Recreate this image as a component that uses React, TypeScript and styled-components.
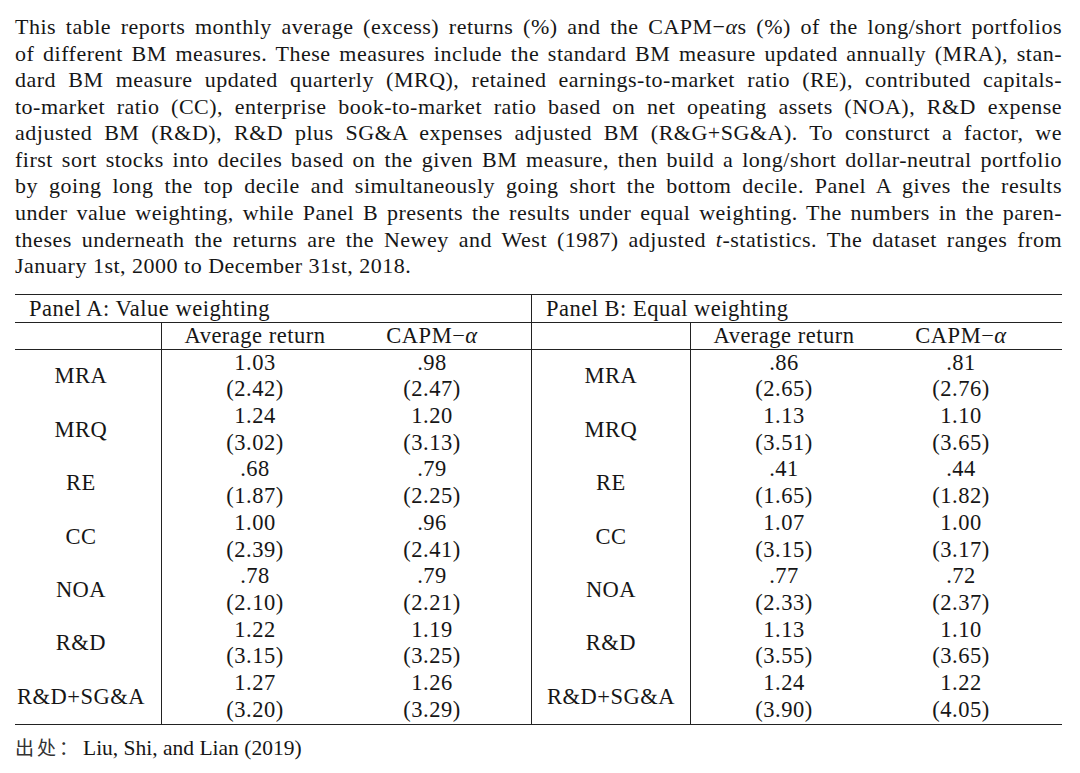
import React from "react";
import styled, { createGlobalStyle } from "styled-components";

const Global = createGlobalStyle`
  html, body { margin: 0; padding: 0; background: #fff; }
  body { font-family: "Liberation Serif", "Times New Roman", serif; color: #161616; }
`;

const Page = styled.div`
  width: 1047px;
  padding: 14px 0 0 15px;
`;

const Caption = styled.div`
  font-size: 22px;
  letter-spacing: 0.5px;
  line-height: 26.56px;
`;

const Line = styled.div<{ $last?: boolean }>`
  text-align: ${(p) => (p.$last ? "left" : "justify")};
  text-align-last: ${(p) => (p.$last ? "left" : "justify")};
`;

const Table = styled.div`
  margin-top: 14px;
  display: flex;
  border-top: 1px solid #222;
  border-bottom: 1px solid #222;
  font-size: 22.5px;
  letter-spacing: 0.5px;
`;

const Panel = styled.div<{ $w: number; $divider?: boolean }>`
  width: ${(p) => p.$w}px;
  box-sizing: border-box;
  border-right: ${(p) => (p.$divider ? "1px solid #222" : "none")};
`;

const PanelTitle = styled.div`
  height: 27px;
  line-height: 27px;
  padding-left: 14px;
  border-bottom: 1px solid #222;
`;

const Grid = styled.div<{ $label: number }>`
  display: grid;
  grid-template-columns: ${(p) => p.$label}px 186px 168px 1fr;
`;

const HeadCell = styled.div<{ $divider?: boolean }>`
  height: 26px;
  line-height: 26px;
  text-align: center;
  border-bottom: 1px solid #222;
  border-right: ${(p) => (p.$divider ? "1px solid #222" : "none")};
`;

const LabelCell = styled.div<{ $padRight: number }>`
  box-sizing: border-box;
  height: 53.43px;
  display: flex;
  align-items: center;
  justify-content: center;
  padding-right: ${(p) => p.$padRight}px;
  border-right: 1px solid #222;
`;

const ValueCell = styled.div`
  height: 53.43px;
  display: flex;
  flex-direction: column;
  align-items: center;
  line-height: 26.7px;
`;

const Spacer = styled.div``;

const Footer = styled.div`
  margin-top: 10px;
  font-size: 21.5px;
  line-height: 24px;
  font-family: "Liberation Serif", "Noto Sans CJK SC", serif;
`;

const Cjk = styled.span`
  font-family: "Noto Sans CJK SC", serif;
  font-size: 19px;
  letter-spacing: 3px;
  margin-right: 2px;
  color: #333;
`;

type Row = { label: string; avg: [string, string]; capm: [string, string] };

const panelA: Row[] = [
  { label: "MRA", avg: ["1.03", "(2.42)"], capm: [".98", "(2.47)"] },
  { label: "MRQ", avg: ["1.24", "(3.02)"], capm: ["1.20", "(3.13)"] },
  { label: "RE", avg: [".68", "(1.87)"], capm: [".79", "(2.25)"] },
  { label: "CC", avg: ["1.00", "(2.39)"], capm: [".96", "(2.41)"] },
  { label: "NOA", avg: [".78", "(2.10)"], capm: [".79", "(2.21)"] },
  { label: "R&D", avg: ["1.22", "(3.15)"], capm: ["1.19", "(3.25)"] },
  { label: "R&D+SG&A", avg: ["1.27", "(3.20)"], capm: ["1.26", "(3.29)"] },
];

const panelB: Row[] = [
  { label: "MRA", avg: [".86", "(2.65)"], capm: [".81", "(2.76)"] },
  { label: "MRQ", avg: ["1.13", "(3.51)"], capm: ["1.10", "(3.65)"] },
  { label: "RE", avg: [".41", "(1.65)"], capm: [".44", "(1.82)"] },
  { label: "CC", avg: ["1.07", "(3.15)"], capm: ["1.00", "(3.17)"] },
  { label: "NOA", avg: [".77", "(2.33)"], capm: [".72", "(2.37)"] },
  { label: "R&D", avg: ["1.13", "(3.55)"], capm: ["1.10", "(3.65)"] },
  { label: "R&D+SG&A", avg: ["1.24", "(3.90)"], capm: ["1.22", "(4.05)"] },
];

const Capm = () => (
  <>
    CAPM−<i>α</i>
  </>
);

function PanelView({
  title,
  rows,
  width,
  label,
  padRight,
  divider,
}: {
  title: string;
  rows: Row[];
  width: number;
  label: number;
  padRight: number;
  divider?: boolean;
}) {
  return (
    <Panel $w={width} $divider={divider}>
      <PanelTitle>{title}</PanelTitle>
      <Grid $label={label}>
        <HeadCell $divider />
        <HeadCell>Average return</HeadCell>
        <HeadCell>
          <Capm />
        </HeadCell>
        <HeadCell />
        {rows.map((r) => (
          <React.Fragment key={r.label}>
            <LabelCell $padRight={padRight}>{r.label}</LabelCell>
            <ValueCell>
              <span>{r.avg[0]}</span>
              <span>{r.avg[1]}</span>
            </ValueCell>
            <ValueCell>
              <span>{r.capm[0]}</span>
              <span>{r.capm[1]}</span>
            </ValueCell>
            <Spacer />
          </React.Fragment>
        ))}
      </Grid>
    </Panel>
  );
}

export default function App() {
  return (
    <>
      <Global />
      <Page>
        <Caption>
          <Line>
            This table reports monthly average (excess) returns (%) and the CAPM−<i>α</i>s (%) of the long/short portfolios
          </Line>
          <Line>
            of different BM measures. These measures include the standard BM measure updated annually (MRA), stan-
          </Line>
          <Line>
            dard BM measure updated quarterly (MRQ), retained earnings-to-market ratio (RE), contributed capitals-
          </Line>
          <Line>
            to-market ratio (CC), enterprise book-to-market ratio based on net opeating assets (NOA), R&amp;D expense
          </Line>
          <Line>
            adjusted BM (R&amp;D), R&amp;D plus SG&amp;A expenses adjusted BM (R&amp;G+SG&amp;A). To consturct a factor, we
          </Line>
          <Line>
            first sort stocks into deciles based on the given BM measure, then build a long/short dollar-neutral portfolio
          </Line>
          <Line>
            by going long the top decile and simultaneously going short the bottom decile. Panel A gives the results
          </Line>
          <Line>
            under value weighting, while Panel B presents the results under equal weighting. The numbers in the paren-
          </Line>
          <Line>
            theses underneath the returns are the Newey and West (1987) adjusted <i>t</i>-statistics. The dataset ranges from
          </Line>
          <Line $last>January 1st, 2000 to December 31st, 2018.</Line>
        </Caption>
        <Table>
          <PanelView title="Panel A: Value weighting" rows={panelA} width={517} label={147} padRight={14} divider />
          <PanelView title="Panel B: Equal weighting" rows={panelB} width={530} label={159} padRight={0} />
        </Table>
        <Footer>
          <Cjk>出处：</Cjk>Liu, Shi, and Lian (2019)
        </Footer>
      </Page>
    </>
  );
}
